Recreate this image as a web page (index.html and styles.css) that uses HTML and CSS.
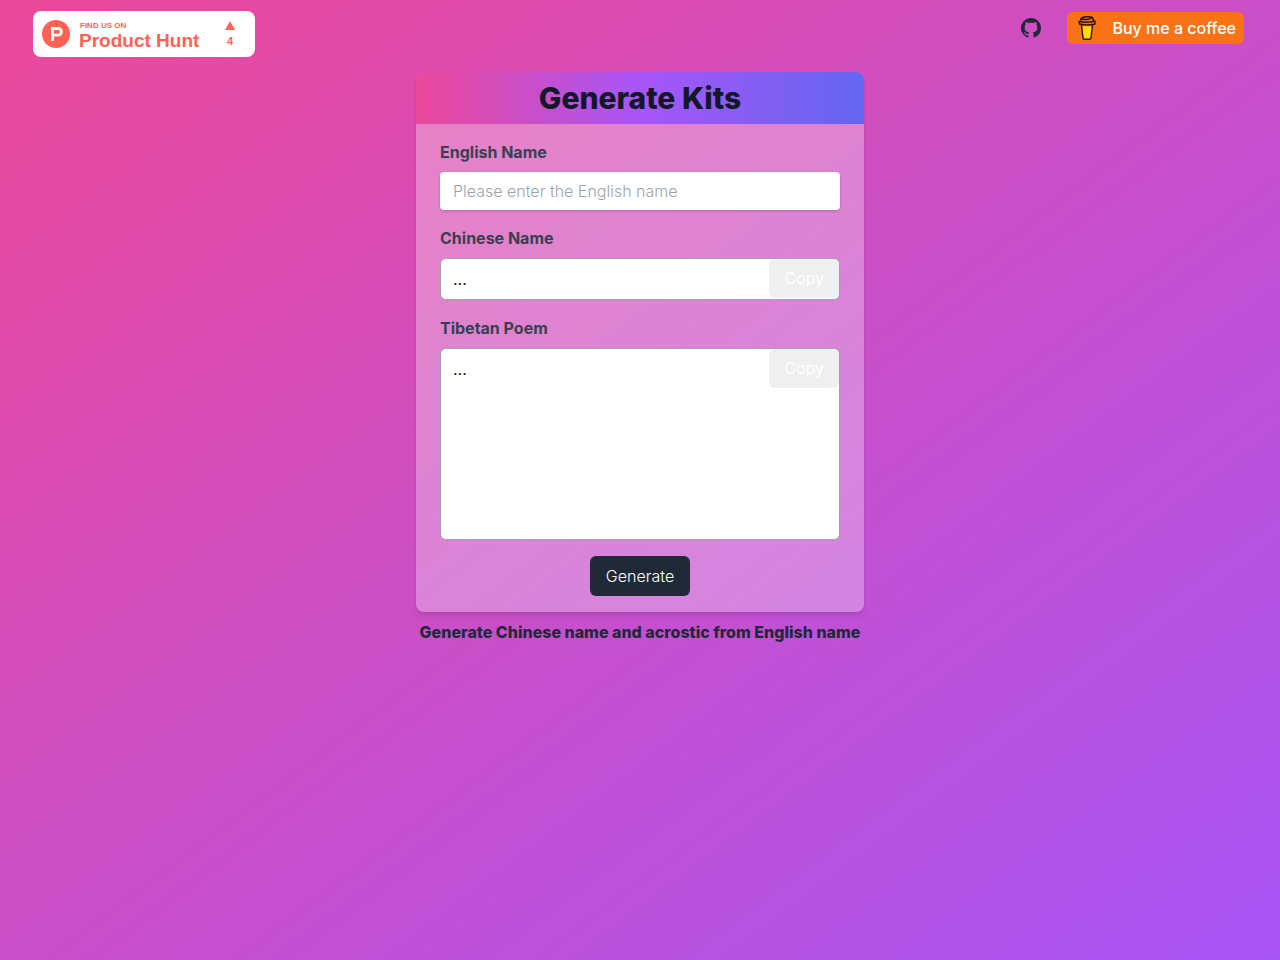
FILE: index.html
```
<!DOCTYPE html>
<html lang="en">
<head>
    <meta charset="UTF-8">
    <meta name="viewport" content="width=device-width, initial-scale=1.0">
    <title>Generate Kits</title>
    <link rel="stylesheet" href="styles.css">
</head>
<body>

    <header class="topbar">
        <a class="hunt" href="#" aria-label="Find us on Product Hunt">
            <svg class="hunt-logo" viewBox="0 0 28 28" aria-hidden="true">
                <circle cx="14" cy="14" r="14" fill="#ff6154"/>
                <path fill="#fff" fill-rule="evenodd" d="M9 7h7a4.8 4.8 0 0 1 0 9.6h-4V21H9zM12 10v3.8h4a1.9 1.9 0 0 0 0-3.8z"/>
            </svg>
            <span class="hunt-text">
                <span class="hunt-small">FIND US ON</span>
                <span class="hunt-name">Product Hunt</span>
            </span>
            <span class="hunt-votes">
                <svg width="10" height="9" viewBox="0 0 10 9" aria-hidden="true"><path fill="#ff6154" d="M5 0l5 9H0z"/></svg>
                <span>4</span>
            </span>
        </a>

        <nav class="links">
            <a class="github" href="#" aria-label="GitHub">
                <svg width="20" height="20" viewBox="0 0 16 16" aria-hidden="true">
                    <path fill="#1f2937" d="M8 0C3.58 0 0 3.58 0 8c0 3.54 2.29 6.53 5.47 7.59.4.07.55-.17.55-.38 0-.19-.01-.82-.01-1.49-2.01.37-2.53-.49-2.69-.94-.09-.23-.48-.94-.82-1.13-.28-.15-.68-.52-.01-.53.63-.01 1.08.58 1.23.82.72 1.21 1.87.87 2.33.66.07-.52.28-.87.51-1.07-1.78-.2-3.64-.89-3.64-3.95 0-.87.31-1.59.82-2.15-.08-.2-.36-1.02.08-2.12 0 0 .67-.21 2.2.82.64-.18 1.32-.27 2-.27s1.36.09 2 .27c1.53-1.04 2.2-.82 2.2-.82.44 1.1.16 1.92.08 2.12.51.56.82 1.27.82 2.15 0 3.07-1.87 3.75-3.65 3.95.29.25.54.73.54 1.48 0 1.07-.01 1.93-.01 2.2 0 .21.15.46.55.38A8.01 8.01 0 0 0 16 8c0-4.42-3.58-8-8-8z"/>
                </svg>
            </a>
            <a class="coffee" href="#">
                <svg width="18" height="24" viewBox="0 0 18 24" aria-hidden="true">
                    <path fill="#ff9a1c" d="M3 8h12l-2 15H5z"/>
                    <path fill="#ffdd00" d="M4 10.500h9.500l-1.500 12H5.500z"/>
                    <g fill="none" stroke="#2a1208" stroke-width="1.400" stroke-linejoin="round" stroke-linecap="round">
                        <path d="M3.500 9l1.500 13c0 1 1 1.300 2 1.300h4c1 0 2-.3 2-1.300L14.500 9"/>
                        <path d="M1 5.500C6 6.500 12 6.500 17 5v3C12 9.300 6 9.300 1.500 8z"/>
                        <path d="M2.500 5l.5-2.500C5 .5 12 .3 14.500 1.500l1 3M3 2.500c3 1.500 8 1.500 11.500-1"/>
                    </g>
                </svg>
                <span>Buy me a coffee</span>
            </a>
        </nav>
    </header>

    <main>
        <form class="card">
            <h1>Generate Kits</h1>
            <div class="fields">
                <label for="english">English Name</label>
                <input class="name-input" type="text" id="english" placeholder="Please enter the English name">

                <label for="chinese">Chinese Name</label>
                <div class="result">
                    <output id="chinese">...</output>
                    <button class="copy" type="button" disabled>Copy</button>
                </div>

                <label for="poem">Tibetan Poem</label>
                <div class="result poem">
                    <output id="poem">...</output>
                    <button class="copy" type="button" disabled>Copy</button>
                </div>

                <button class="generate" type="button">Generate</button>
            </div>
        </form>
        <p class="tagline">Generate Chinese name and acrostic from English name</p>
    </main>

</body>
</html>
```
FILE: styles.css
```
* {
    box-sizing: border-box;
}

body {
    margin: 0;
    min-height: 100vh;
    font-family: Inter, sans-serif;
    font-size: 16px;
    font-weight: 300;
    line-height: 24px;
    color: #111827;
    background: linear-gradient(to bottom right, #ec4899, #a855f7);
}

a {
    color: inherit;
    text-decoration: none;
}

button, input {
    font: inherit;
}

.topbar {
    display: flex;
    justify-content: space-between;
    align-items: flex-start;
    height: 72px;
    padding: 11px 36px 0 33px;
}

/* product hunt badge */
.hunt {
    display: flex;
    align-items: center;
    width: 222px;
    height: 46px;
    padding: 0 20px 0 9px;
    border-radius: 8px;
    background: #fff;
    color: #ff6154;
    font-family: "Liberation Sans", Arial, sans-serif;
    font-weight: bold;
}

.hunt-logo {
    width: 28px;
    height: 28px;
}

.hunt-text {
    display: flex;
    flex-direction: column;
    gap: 1px;
    padding-top: 4px;
    margin-left: 9px;
}

.hunt-small {
    padding-left: 1px;
    font-size: 8px;
    line-height: 8px;
}

.hunt-name {
    font-size: 19px;
    line-height: 20px;
}

.hunt-votes {
    display: flex;
    flex-direction: column;
    align-items: center;
    gap: 4px;
    padding-top: 1px;
    margin-left: auto;
    font-size: 11px;
    line-height: 14px;
}

.links {
    display: flex;
    align-items: center;
    gap: 26px;
    padding-top: 1px;
}

.github {
    display: flex;
}

.coffee {
    display: flex;
    align-items: center;
    gap: 16px;
    height: 32px;
    padding: 0 8px 0 11px;
    border-radius: 6px;
    background: #f97316;
    color: #fff;
    font-weight: 500;
}

/* card */
.card {
    max-width: 448px;
    margin: 0 auto;
    border-radius: 8px;
    overflow: hidden;
    background: rgba(255, 255, 255, .3);
    box-shadow: 0 4px 6px -1px rgba(0, 0, 0, .1), 0 2px 4px -2px rgba(0, 0, 0, .1);
}

h1 {
    margin: 0;
    padding: 8px;
    font-size: 30px;
    font-weight: 800;
    line-height: 36px;
    text-align: center;
    background: linear-gradient(to right, #ec4899, #a855f7, #6366f1);
}

.fields {
    display: flex;
    flex-direction: column;
    padding: 16px 24px;
}

label {
    margin-bottom: 8px;
    font-weight: 700;
    color: #374151;
}

.name-input {
    width: 100%;
    height: 38px;
    margin-bottom: 16px;
    padding: 0 13px;
    border: 0;
    border-radius: 4px;
    background: #fff;
    color: #374151;
    box-shadow: 0 1px 3px rgba(0, 0, 0, .2);
}

.name-input::placeholder {
    color: #9ca3af;
}

.result {
    position: relative;
    min-height: 42px;
    margin-bottom: 16px;
    padding: 8px 12px;
    border: 1px solid #9ca3af;
    border-radius: 6px;
    background: #fff;
    font-weight: 400;
}

.poem {
    min-height: 192px;
}

.copy {
    position: absolute;
    top: 0;
    right: 0;
    height: 39px;
    padding: 0 15px 1px;
    border: 0;
    border-radius: 6px;
    background: #edeff1;
    color: #fff;
}

.generate {
    align-self: center;
    height: 40px;
    padding: 0 16px;
    border: 0;
    border-radius: 6px;
    background: #1f2937;
    color: #fff;
}

.tagline {
    margin: 8px 0 0;
    font-weight: 800;
    text-align: center;
    color: #1f2937;
}
```
